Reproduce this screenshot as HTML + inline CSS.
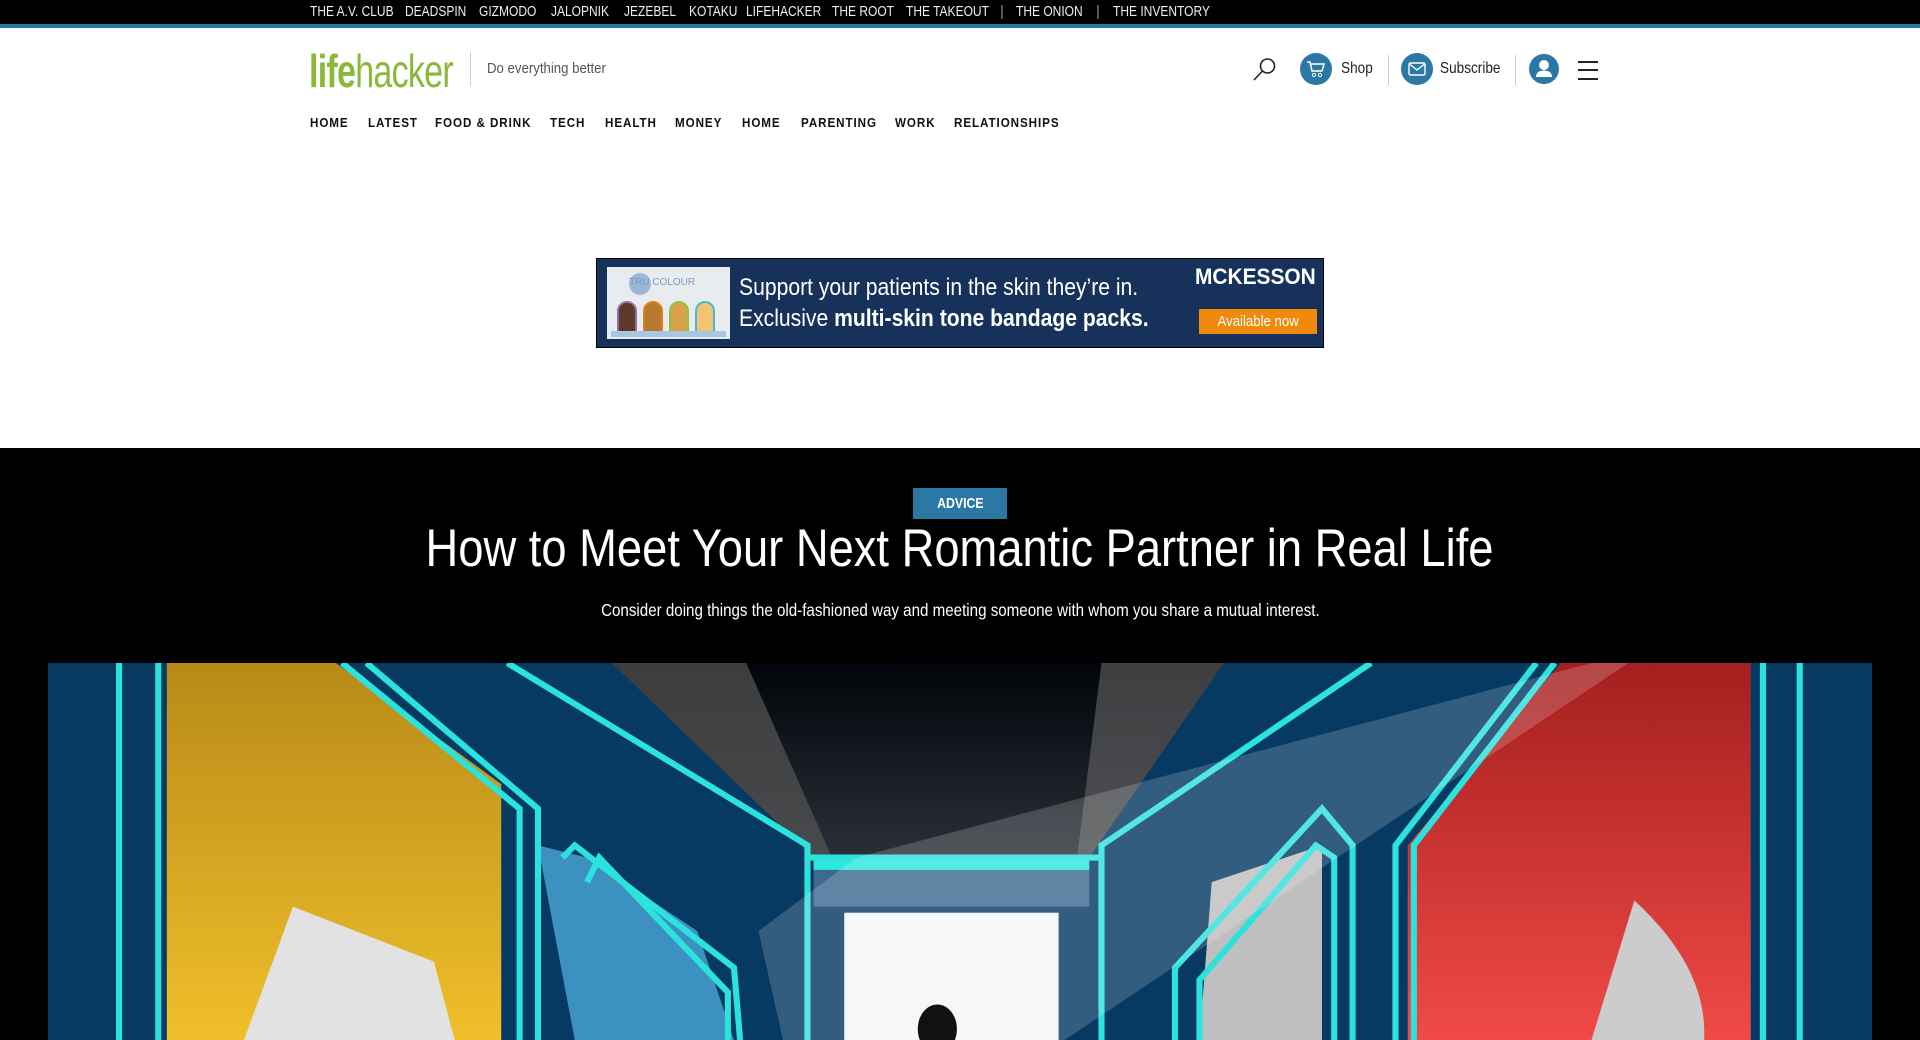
<!DOCTYPE html>
<html><head><meta charset="utf-8">
<style>
*{margin:0;padding:0;box-sizing:border-box}
body{width:1920px;height:1040px;overflow:hidden;background:#fff;font-family:"Liberation Sans",sans-serif;position:relative}
.a{position:absolute;white-space:nowrap}
.n{display:inline-block;transform:scaleX(.8);transform-origin:left center}
#top{position:absolute;left:0;top:0;width:1920px;background:#000;border-bottom:4px solid #2a78a3;height:28px}
#top .a{color:#eee;font-size:15px;top:3px}
#nav .a{top:116px;font-size:12.5px;font-weight:bold;letter-spacing:1px;color:#111}
#nav .n{transform:scaleX(.93)}
.circ{position:absolute;width:32px;height:32px;border-radius:50%;background:#2a78a3}
</style></head><body>
<div id="top">
<div class="a" style="left:310px"><span class="n">THE A.V. CLUB</span></div>
<div class="a" style="left:405px"><span class="n">DEADSPIN</span></div>
<div class="a" style="left:479px"><span class="n">GIZMODO</span></div>
<div class="a" style="left:551px"><span class="n">JALOPNIK</span></div>
<div class="a" style="left:624px"><span class="n">JEZEBEL</span></div>
<div class="a" style="left:689px"><span class="n">KOTAKU</span></div>
<div class="a" style="left:746px"><span class="n">LIFEHACKER</span></div>
<div class="a" style="left:832px"><span class="n">THE ROOT</span></div>
<div class="a" style="left:906px"><span class="n">THE TAKEOUT</span></div>
<div class="a" style="left:1000px;color:#888">|</div>
<div class="a" style="left:1016px"><span class="n">THE ONION</span></div>
<div class="a" style="left:1096px;color:#888">|</div>
<div class="a" style="left:1113px"><span class="n">THE INVENTORY</span></div>
</div>

<div class="a" style="left:309px;top:44px;font-size:46px;color:#8cb83a;letter-spacing:-1px"><span class="n" style="transform:scaleX(.74)"><b>life</b>hacker</span></div>
<div class="a" style="left:470px;top:52px;width:1px;height:34px;background:#ccc"></div>
<div class="a" style="left:487px;top:60px;font-size:15px;color:#555"><span class="n" style="transform:scaleX(.88)">Do everything better</span></div>

<svg class="a" style="left:1252px;top:56px" width="26" height="26" viewBox="0 0 26 26"><circle cx="15.5" cy="10" r="7" fill="none" stroke="#222" stroke-width="1.6"/><line x1="10.5" y1="15" x2="2" y2="24" stroke="#222" stroke-width="1.6"/></svg>
<div class="circ" style="left:1300px;top:53px"></div>
<svg class="a" style="left:1306px;top:60px" width="20" height="18" viewBox="0 0 20 18"><path d="M1 2h3l2 9h10l2-7H5" fill="none" stroke="#fff" stroke-width="1.5"/><circle cx="8" cy="15" r="1.6" fill="none" stroke="#fff"/><circle cx="14" cy="15" r="1.6" fill="none" stroke="#fff"/></svg>
<div class="a" style="left:1341px;top:60px;font-size:16px;color:#222"><span class="n" style="transform:scaleX(.85)">Shop</span></div>
<div class="a" style="left:1388px;top:55px;width:1px;height:30px;background:#ccc"></div>
<div class="circ" style="left:1401px;top:53px"></div>
<svg class="a" style="left:1408px;top:62px" width="18" height="14" viewBox="0 0 18 14"><rect x="1" y="1" width="16" height="12" rx="1.5" fill="none" stroke="#fff" stroke-width="1.4"/><path d="M1.5 2l7.5 6 7.5-6" fill="none" stroke="#fff" stroke-width="1.4"/></svg>
<div class="a" style="left:1440px;top:60px;font-size:16px;color:#222"><span class="n" style="transform:scaleX(.85)">Subscribe</span></div>
<div class="a" style="left:1515px;top:55px;width:1px;height:30px;background:#ccc"></div>
<div class="circ" style="left:1529px;top:54px;width:30px;height:30px"></div>
<svg class="a" style="left:1529px;top:54px" width="30" height="30" viewBox="0 0 30 30"><circle cx="15" cy="11" r="5" fill="#fff"/><path d="M7 23c0-5 4-6.5 8-6.5s8 1.5 8 6.5z" fill="#fff"/></svg>
<div class="a" style="left:1578px;top:61px;width:20px;height:2px;background:#222"></div>
<div class="a" style="left:1578px;top:69px;width:20px;height:2px;background:#222"></div>
<div class="a" style="left:1578px;top:78px;width:20px;height:2px;background:#222"></div>

<div id="nav">
<div class="a" style="left:310px"><span class="n">HOME</span></div>
<div class="a" style="left:368px"><span class="n">LATEST</span></div>
<div class="a" style="left:435px"><span class="n">FOOD &amp; DRINK</span></div>
<div class="a" style="left:550px"><span class="n">TECH</span></div>
<div class="a" style="left:605px"><span class="n">HEALTH</span></div>
<div class="a" style="left:675px"><span class="n">MONEY</span></div>
<div class="a" style="left:742px"><span class="n">HOME</span></div>
<div class="a" style="left:801px"><span class="n">PARENTING</span></div>
<div class="a" style="left:895px"><span class="n">WORK</span></div>
<div class="a" style="left:954px"><span class="n">RELATIONSHIPS</span></div>
</div>

<div class="a" style="left:596px;top:258px;width:728px;height:90px;background:#16325a;border:1px solid #000">
 <div class="a" style="left:10px;top:8px;width:123px;height:72px;background:#e9ecef">
  <div class="a" style="left:22px;top:6px;width:22px;height:22px;border-radius:50%;background:#9cb8d6"></div>
  <div class="a" style="left:22px;top:10px;font-size:10px;color:#7a9cc0">TRU COLOUR</div>
  <div class="a" style="left:10px;top:34px;width:20px;height:32px;border-radius:10px 10px 0 0;background:#5b3a26;border:2px solid #9a6ab0"></div>
  <div class="a" style="left:36px;top:34px;width:20px;height:32px;border-radius:10px 10px 0 0;background:#b57a2e;border:2px solid #e47d22"></div>
  <div class="a" style="left:62px;top:34px;width:20px;height:32px;border-radius:10px 10px 0 0;background:#d9a24a;border:2px solid #8fc04a"></div>
  <div class="a" style="left:88px;top:34px;width:20px;height:32px;border-radius:10px 10px 0 0;background:#f2c373;border:2px solid #4cb7d6"></div>
  <div class="a" style="left:4px;top:64px;width:115px;height:6px;background:#a9c7e3"></div>
 </div>
 <div class="a" style="left:142px;top:15px;font-size:24px;color:#fff"><span class="n" style="transform:scaleX(.88)">Support your patients in the skin they’re in.</span></div>
 <div class="a" style="left:142px;top:46px;font-size:24px;color:#fff"><span class="n" style="transform:scaleX(.88)">Exclusive <b>multi-skin tone bandage packs.</b></span></div>
 <div class="a" style="left:598px;top:5px;font-size:22px;font-weight:bold;color:#fff"><span class="n" style="transform:scaleX(.95)">MCKESSON</span></div>
 <div class="a" style="left:602px;top:50px;width:118px;height:25px;background:#f08a0c;color:#fff;font-size:15px;text-align:center;line-height:25px"><span class="n" style="transform:scaleX(.88);transform-origin:center">Available now</span></div>
</div>

<div class="a" style="left:0;top:448px;width:1920px;height:592px;background:#000"></div>
<div class="a" style="left:913px;top:488px;width:94px;height:31px;background:#2a78a3;color:#fff;font-size:15px;font-weight:bold;text-align:center;line-height:31px"><span class="n" style="transform:scaleX(.82);transform-origin:center">ADVICE</span></div>
<div class="a" style="left:0;top:518px;width:1920px;text-align:center;font-size:53px;color:#fff"><span class="n" style="transform:scaleX(.855);transform-origin:center">How to Meet Your Next Romantic Partner in Real Life</span></div>
<div class="a" style="left:0;top:600px;width:1920px;text-align:center;font-size:17.5px;color:#fff"><span class="n" style="transform:scaleX(.865);transform-origin:center">Consider doing things the old-fashioned way and meeting someone with whom you share a mutual interest.</span></div>

<svg class="a" style="left:48px;top:663px" width="1824" height="377" viewBox="40 541 1489 308" preserveAspectRatio="none">
<defs>
<linearGradient id="cl" x1="0" y1="0" x2="0" y2="1"><stop offset="0" stop-color="#01050a"/><stop offset="1" stop-color="#2a3038"/></linearGradient>
<linearGradient id="yl" x1="0" y1="0" x2="0" y2="1"><stop offset="0" stop-color="#b78a18"/><stop offset="1" stop-color="#f0bf2a"/></linearGradient>
<linearGradient id="rd" x1="0" y1="0" x2="0" y2="1"><stop offset="0" stop-color="#a41f1f"/><stop offset="1" stop-color="#f04a46"/></linearGradient>
</defs>
<rect x="40" y="541" width="1489" height="308" fill="#063a63"/>
<polygon points="137,541 275,541 410,640 410,849 137,849" fill="url(#yl)"/>
<polygon points="240,740 355,785 372,849 200,849" fill="#e2e2e2"/>
<polygon points="1275,541 1430,541 1430,849 1150,849 1150,690" fill="url(#rd)"/>
<path d="M1335,735 Q1395,790 1392,849 L1300,849 Z" fill="#ccc"/>
<polygon points="500,541 1000,541 890,700 665,700" fill="url(#cl)"/>
<polygon points="500,541 610,541 680,700 665,700" fill="#555" opacity=".7"/>
<polygon points="1000,541 900,541 880,700 890,700" fill="#666" opacity=".6"/>
<rect x="665" y="700" width="225" height="40" fill="#3e6a90"/>
<rect x="665" y="700" width="225" height="10" fill="#2ee8e0"/>
<rect x="690" y="745" width="175" height="104" fill="#f4f6f8"/>
<polygon points="440,690 480,700 570,760 600,849 470,849" fill="#4aa8d8" opacity=".8"/>
<polygon points="990,720 1080,690 1080,849 980,849" fill="#bfbfbf"/>
<g fill="none" stroke="#2ce2dc" stroke-width="5">
<line x1="98" y1="541" x2="98" y2="849"/><line x1="130" y1="541" x2="130" y2="849"/>
<polyline points="280,541 425,660 425,849"/><polyline points="300,541 440,660 440,849"/>
<polyline points="415,541 660,690 660,849"/><polyline points="460,700 470,690 600,790 605,849"/>
<polyline points="480,720 490,700 595,810 595,849"/>
<polyline points="1120,541 900,690 900,849"/><polyline points="1255,541 1140,690 1140,849"/><polyline points="1270,541 1155,690 1155,849"/>
<polyline points="960,849 960,790 1080,660 1105,690 1105,849"/><polyline points="980,849 980,800 1075,690 1090,700 1090,849"/>
<line x1="1440" y1="541" x2="1440" y2="849"/><line x1="1470" y1="541" x2="1470" y2="849"/>
<line x1="660" y1="700" x2="900" y2="700"/>
</g>
<polygon points="620,760 700,700 1300,541 1330,541 870,849 640,849" fill="#fff" opacity=".18"/>
<ellipse cx="766" cy="840" rx="16" ry="20" fill="#111"/>
</svg>
</body></html>
